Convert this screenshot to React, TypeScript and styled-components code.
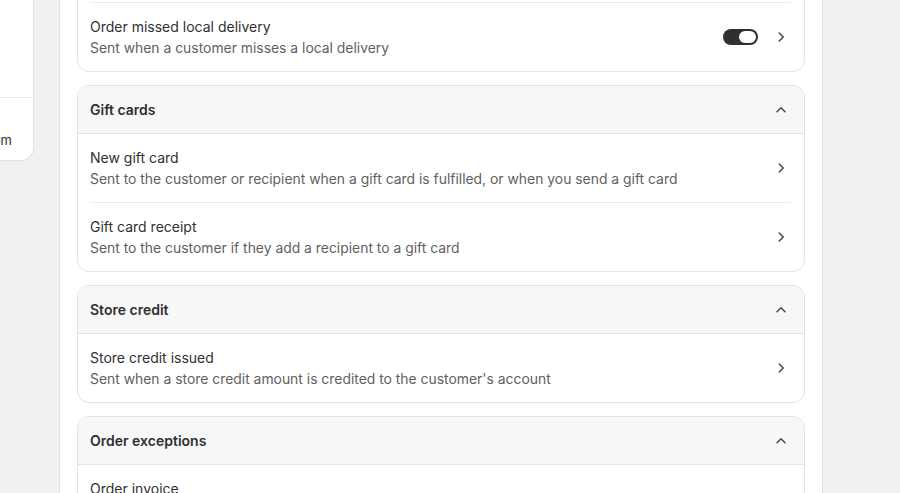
import React from 'react';
import styled, { createGlobalStyle } from 'styled-components';

const GlobalStyle = createGlobalStyle`
  html, body {
    margin: 0;
    padding: 0;
    background: #f1f1f1;
    overflow: hidden;
  }
  body {
    font-family: Inter, "Noto Sans", "Liberation Sans", sans-serif;
    font-size: 14px;
    color: #303030;
    -webkit-font-smoothing: antialiased;
  }
`;

type Notification = {
  title: string;
  description: string;
  toggle?: boolean;
};

type Section = {
  heading?: string;
  items: Notification[];
};

const sections: Section[] = [
  {
    items: [
      {
        title: 'Order delivered',
        description: 'Sent when a local order is delivered',
        toggle: true,
      },
      {
        title: 'Order missed local delivery',
        description: 'Sent when a customer misses a local delivery',
        toggle: true,
      },
    ],
  },
  {
    heading: 'Gift cards',
    items: [
      {
        title: 'New gift card',
        description:
          'Sent to the customer or recipient when a gift card is fulfilled, or when you send a gift card',
      },
      {
        title: 'Gift card receipt',
        description: 'Sent to the customer if they add a recipient to a gift card',
      },
    ],
  },
  {
    heading: 'Store credit',
    items: [
      {
        title: 'Store credit issued',
        description:
          "Sent when a store credit amount is credited to the customer's account",
      },
    ],
  },
  {
    heading: 'Order exceptions',
    items: [
      {
        title: 'Order invoice',
        description: 'Sent to the customer with an invoice for their order',
      },
    ],
  },
];

const Page = styled.div`
  display: flex;
  height: 493px;
  overflow: hidden;
`;

const Sidebar = styled.aside`
  width: 59px;
  flex-shrink: 0;
`;

const NavCard = styled.div`
  width: 33px;
  background: #ffffff;
  border-radius: 0 0 12px 0;
  box-shadow: 0 1px 0 rgba(26, 26, 26, 0.07), 1px 0 0 rgba(26, 26, 26, 0.05);
  overflow: hidden;
`;

const NavTop = styled.div`
  height: 97px;
  border-bottom: 1px solid #ebebeb;
`;

const NavBottom = styled.div`
  height: 62px;
  display: flex;
  align-items: center;
  justify-content: flex-end;
  padding: 22px 21px 0 0;
  box-sizing: border-box;
  white-space: nowrap;
  color: #303030;
  font-size: 13px;
  line-height: 20px;
`;

const Main = styled.main`
  width: 728px;
  flex-shrink: 0;
  background: #ffffff;
  border-left: 1px solid #e3e3e3;
  border-right: 1px solid #e3e3e3;
  padding: 0 17px;
  overflow: hidden;
`;

const Stack = styled.div`
  display: flex;
  flex-direction: column;
  gap: 13px;
  margin-top: -67px;
`;

const Card = styled.section`
  border: 1px solid #e3e3e3;
  border-radius: 12px;
  background: #ffffff;
  overflow: hidden;
`;

const CardHeader = styled.div`
  height: 47px;
  display: flex;
  align-items: center;
  justify-content: space-between;
  padding: 0 13px 0 12px;
  background: #f7f7f7;
  border-bottom: 1px solid #e3e3e3;
`;

const Heading = styled.h2`
  margin: 0;
  font-size: 14px;
  font-weight: 600;
  line-height: 20px;
  color: #303030;
`;

const Rows = styled.div`
  padding: 0 13px 0 12px;
`;

const Row = styled.div<{ $divided: boolean }>`
  display: flex;
  align-items: center;
  justify-content: space-between;
  height: 68px;
  border-top: ${(p) => (p.$divided ? '1px solid #ebebeb' : 'none')};
`;

const RowText = styled.div`
  display: flex;
  flex-direction: column;
  gap: 1px;
`;

const Title = styled.span`
  font-size: 14px;
  line-height: 20px;
  color: #303030;
`;

const Description = styled.span`
  font-size: 13.9px;
  line-height: 20px;
  color: #616161;
`;

const Actions = styled.div`
  display: flex;
  align-items: center;
  gap: 13px;
`;

const Toggle = styled.span<{ $on: boolean }>`
  width: 35px;
  height: 16px;
  border-radius: 8px;
  background: ${(p) => (p.$on ? '#303030' : '#e3e3e3')};
  display: flex;
  align-items: center;
  justify-content: ${(p) => (p.$on ? 'flex-end' : 'flex-start')};
  padding: 0 2px;
  box-sizing: border-box;
`;

const Knob = styled.span`
  width: 17px;
  height: 12px;
  border-radius: 6px;
  background: #ffffff;
`;

const Icon = styled.svg`
  width: 20px;
  height: 20px;
  fill: #4a4a4a;
  flex-shrink: 0;
`;

const ChevronRight = () => (
  <Icon viewBox="0 0 20 20">
    <path d="M7.72 14.53a.75.75 0 0 1 0-1.06l3.47-3.47-3.47-3.47a.75.75 0 0 1 1.06-1.06l4 4a.75.75 0 0 1 0 1.06l-4 4a.75.75 0 0 1-1.06 0Z" />
  </Icon>
);

const ChevronUp = () => (
  <Icon viewBox="0 0 20 20">
    <path d="M14.53 12.28a.75.75 0 0 1-1.06 0l-3.47-3.47-3.47 3.47a.75.75 0 0 1-1.06-1.06l4-4a.75.75 0 0 1 1.06 0l4 4a.75.75 0 0 1 0 1.06Z" />
  </Icon>
);

const Aside = styled.div`
  flex: 1;
`;

const App: React.FC = () => (
  <>
    <GlobalStyle />
    <Page>
      <Sidebar>
        <NavCard>
          <NavTop />
          <NavBottom>Custom</NavBottom>
        </NavCard>
      </Sidebar>
      <Main>
        <Stack>
          {sections.map((section, i) => (
            <Card key={i}>
              {section.heading && (
                <CardHeader>
                  <Heading>{section.heading}</Heading>
                  <ChevronUp />
                </CardHeader>
              )}
              <Rows>
                {section.items.map((item, j) => (
                  <Row key={item.title} $divided={j > 0}>
                    <RowText>
                      <Title>{item.title}</Title>
                      <Description>{item.description}</Description>
                    </RowText>
                    <Actions>
                      {item.toggle && (
                        <Toggle $on>
                          <Knob />
                        </Toggle>
                      )}
                      <ChevronRight />
                    </Actions>
                  </Row>
                ))}
              </Rows>
            </Card>
          ))}
        </Stack>
      </Main>
      <Aside />
    </Page>
  </>
);

export default App;
